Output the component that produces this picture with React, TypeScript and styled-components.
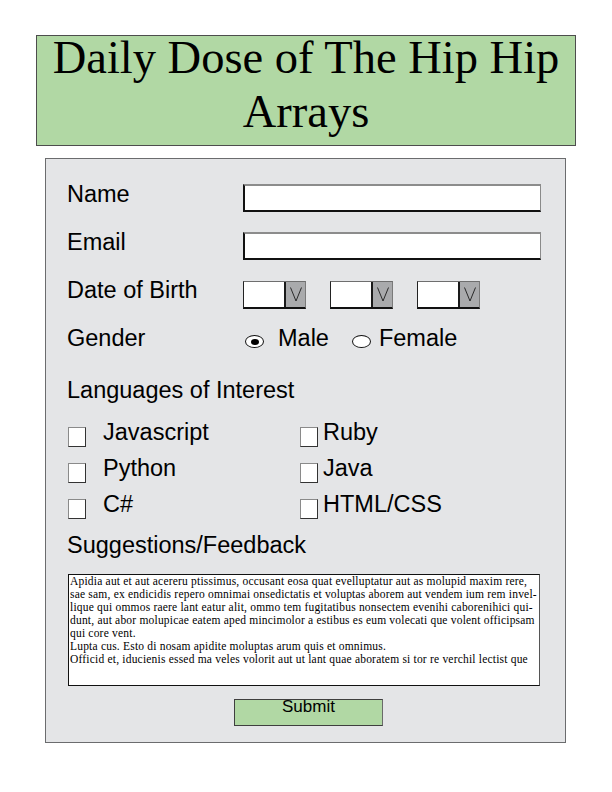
import React from "react";
import styled, { createGlobalStyle } from "styled-components";

const GlobalStyle = createGlobalStyle`
  html, body { margin: 0; padding: 0; background: #ffffff; }
  body { font-family: "Liberation Sans", Arial, sans-serif; color: #000; }
  * { box-sizing: border-box; }
`;

const Page = styled.div`
  width: 612px;
  height: 792px;
  padding-top: 35px;
  display: flex;
  flex-direction: column;
`;

const Header = styled.header`
  margin-left: 36px;
  width: 540px;
  height: 111px;
  background: #b1d8a4;
  border: 1px solid #4d4d4d;
  display: flex;
  justify-content: center;
`;

const Title = styled.h1`
  margin: -5px 0 0;
  font-family: "Liberation Serif", "Times New Roman", serif;
  font-weight: 400;
  font-size: 46.5px;
  line-height: 54px;
  text-align: center;
  width: 520px;
`;

const Panel = styled.form`
  margin: 12px 0 0 45px;
  width: 521px;
  height: 585px;
  background: #e4e5e7;
  border: 1px solid #6b6c6e;
  padding: 22px 0 0 21px;
  display: flex;
  flex-direction: column;
`;

const FieldGrid = styled.div`
  display: grid;
  grid-template-columns: 176px 1fr;
  grid-template-rows: 48px 48px 48px 26px;
  align-items: start;
`;

const Label = styled.div`
  font-size: 23.5px;
  line-height: 26px;
  white-space: nowrap;
`;

const TextBox = styled.div`
  margin-top: 3px;
  width: 298px;
  height: 28px;
  background: #fff;
  border-top: 2px solid #8c8c8c;
  border-left: 2px solid #111;
  border-bottom: 2px solid #111;
  border-right: 1px solid #8a8a8a;
`;

const DateRow = styled.div`
  margin-top: 4px;
  display: flex;
  gap: 24px;
`;

const Select = styled.div`
  width: 63px;
  height: 28px;
  display: flex;
  background: #fff;
  border-top: 1px solid #6e6e6e;
  border-left: 1px solid #222;
  border-bottom: 2px solid #111;
  border-right: 1px solid #7a7a7a;
`;

const SelectValue = styled.div`
  flex: 1;
  border-right: 2px solid #1a1a1a;
`;

const SelectArrow = styled.div`
  width: 19px;
  background: #a9aaac;
  display: flex;
  align-items: center;
  justify-content: center;
`;

const RadioRow = styled.div`
  display: flex;
  align-items: flex-start;
  padding-left: 2px;
`;

const RadioOption = styled.div<{ $gap: number; $after: number }>`
  display: flex;
  align-items: flex-start;
  gap: ${(p) => p.$gap}px;
  margin-right: ${(p) => p.$after}px;
`;

const RadioMark = styled.span<{ $checked?: boolean }>`
  margin-top: 10px;
  width: 19px;
  height: 13px;
  border: 1.5px solid #111;
  border-radius: 50%;
  background: #fff;
  display: flex;
  align-items: center;
  justify-content: center;
  &::after {
    content: "";
    display: ${(p) => (p.$checked ? "block" : "none")};
    width: 8px;
    height: 6px;
    border-radius: 50%;
    background: #000;
  }
`;

const SectionLabel = styled(Label)<{ $top: number }>`
  margin-top: ${(p) => p.$top}px;
`;

const CheckGrid = styled.div`
  margin-top: 16px;
  display: grid;
  grid-template-columns: 232px 1fr;
  grid-auto-rows: 26px;
  row-gap: 10px;
  padding-left: 1px;
`;

const CheckOption = styled.div<{ $gap: number }>`
  display: flex;
  align-items: flex-start;
  gap: ${(p) => p.$gap}px;
`;

const CheckBox = styled.span`
  margin-top: 8px;
  width: 18px;
  height: 20px;
  background: #fff;
  border-top: 1px solid #8a8a8a;
  border-left: 1px solid #8a8a8a;
  border-right: 1px solid #333;
  border-bottom: 1px solid #333;
`;

const Feedback = styled.div`
  margin: 16px 0 0 1px;
  width: 472px;
  height: 112px;
  background: #fff;
  border: 1px solid #111;
  border-right-color: #555;
  padding: 0 0 0 1px;
  font-family: "Liberation Serif", "Times New Roman", serif;
  font-size: 11.5px;
  letter-spacing: 0.2px;
  line-height: 13px;
  overflow: hidden;
`;

const FeedbackLine = styled.div`
  white-space: nowrap;
`;

const SubmitButton = styled.div`
  margin: 13px 0 0 167px;
  width: 149px;
  height: 27px;
  background: #b1d8a4;
  border: 1px solid #3f3f3f;
  border-right-color: #6a6a6a;
  font-size: 17px;
  line-height: 14px;
  text-align: center;
`;

const Chevron = () => (
  <svg width="12" height="15" viewBox="0 0 12 15">
    <polyline points="0.5,0.5 6,14 11.5,0.5" fill="none" stroke="#2a2a2a" strokeWidth="1" />
  </svg>
);

const DateSelect = () => (
  <Select>
    <SelectValue />
    <SelectArrow>
      <Chevron />
    </SelectArrow>
  </Select>
);

const feedbackLines = [
  "Apidia aut et aut acereru ptissimus, occusant eosa quat evelluptatur aut as molupid maxim rere,",
  "sae sam, ex endicidis repero omnimai onsedictatis et voluptas aborem aut vendem ium rem invel-",
  "lique qui ommos raere lant eatur alit, ommo tem fugitatibus nonsectem evenihi caborenihici qui-",
  "dunt, aut abor molupicae eatem aped mincimolor a estibus es eum volecati que volent officipsam",
  "qui core vent.",
  "Lupta cus. Esto di nosam apidite moluptas arum quis et omnimus.",
  "Officid et, iducienis essed ma veles volorit aut ut lant quae aboratem si tor re verchil lectist que",
];

const languages: { name: string; gap: number }[] = [
  { name: "Javascript", gap: 17 },
  { name: "Ruby", gap: 5 },
  { name: "Python", gap: 17 },
  { name: "Java", gap: 5 },
  { name: "C#", gap: 17 },
  { name: "HTML/CSS", gap: 5 },
];

export default function App() {
  return (
    <>
      <GlobalStyle />
      <Page>
        <Header>
          <Title>Daily Dose of The Hip Hip Arrays</Title>
        </Header>
        <Panel onSubmit={(e) => e.preventDefault()}>
          <FieldGrid>
            <Label>Name</Label>
            <TextBox />
            <Label>Email</Label>
            <TextBox />
            <Label>Date of Birth</Label>
            <DateRow>
              <DateSelect />
              <DateSelect />
              <DateSelect />
            </DateRow>
            <Label>Gender</Label>
            <RadioRow>
              <RadioOption $gap={14} $after={23}>
                <RadioMark $checked />
                <Label>Male</Label>
              </RadioOption>
              <RadioOption $gap={8} $after={0}>
                <RadioMark />
                <Label>Female</Label>
              </RadioOption>
            </RadioRow>
          </FieldGrid>
          <SectionLabel $top={26}>Languages of Interest</SectionLabel>
          <CheckGrid>
            {languages.map((l) => (
              <CheckOption key={l.name} $gap={l.gap}>
                <CheckBox />
                <Label>{l.name}</Label>
              </CheckOption>
            ))}
          </CheckGrid>
          <SectionLabel $top={15}>Suggestions/Feedback</SectionLabel>
          <Feedback>
            {feedbackLines.map((line, i) => (
              <FeedbackLine key={i}>{line}</FeedbackLine>
            ))}
          </Feedback>
          <SubmitButton>Submit</SubmitButton>
        </Panel>
      </Page>
    </>
  );
}
